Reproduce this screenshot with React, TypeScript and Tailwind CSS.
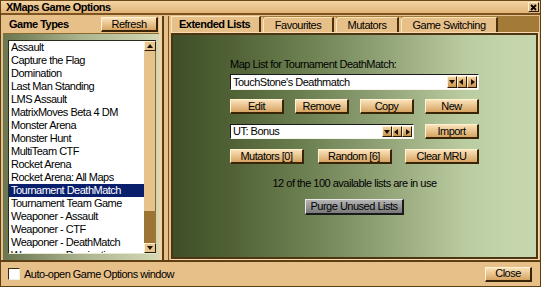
import React from "react";

const items = [
  "Assault",
  "Capture the Flag",
  "Domination",
  "Last Man Standing",
  "LMS Assault",
  "MatrixMoves Beta 4 DM",
  "Monster Arena",
  "Monster Hunt",
  "MultiTeam CTF",
  "Rocket Arena",
  "Rocket Arena: All Maps",
  "Tournament DeathMatch",
  "Tournament Team Game",
  "Weaponer - Assault",
  "Weaponer - CTF",
  "Weaponer - DeathMatch",
  "Weaponer - Domination",
];

function Btn({ w, children, className = "" }: { w: string; children: React.ReactNode; className?: string }) {
  return (
    <div
      className={`${w} ${className} h-[15px] flex items-center justify-center border-t border-l border-[#fff3d6] border-r-2 border-b-2 border-r-[#3a2408] border-b-[#3a2408] bg-gradient-to-b from-[#fae2b8] to-[#d6a462] text-[11px] leading-none text-black`}
    >
      {children}
    </div>
  );
}

function Tri({ dir }: { dir: "down" | "left" | "right" | "up" }) {
  const pts =
    dir === "down"
      ? "1,2 7,2 4,6"
      : dir === "up"
      ? "1,6 7,6 4,2"
      : dir === "left"
      ? "5,1 5,7 1,4"
      : "3,1 3,7 7,4";
  return (
    <svg width="8" height="8" viewBox="0 0 8 8">
      <polygon points={pts} fill="#1a1208" />
    </svg>
  );
}

function ArrowBox({ dir }: { dir: "down" | "left" | "right" | "up" }) {
  return (
    <div className="w-[10px] h-full flex items-center justify-center bg-gradient-to-b from-[#f2d29e] to-[#c8944e] border-t border-l border-[#fff0d0] border-r border-b border-r-[#2a1a06] border-b-[#2a1a06]">
      <Tri dir={dir} />
    </div>
  );
}

function Combo({ w, text, h }: { w: string; text: string; h: string }) {
  return (
    <div className={`${w} ${h} flex items-stretch bg-white border-t border-l border-[#1a1a1a] border-r border-b border-r-[#f4f4e8] border-b-[#f4f4e8]`}>
      <div className="flex-1 pl-[2px] text-[11px] leading-none flex items-center text-black">{text}</div>
      <div className="flex items-stretch py-[1px] pr-[1px] gap-0">
        <ArrowBox dir="down" />
        <ArrowBox dir="left" />
        <ArrowBox dir="right" />
      </div>
    </div>
  );
}

export default function App() {
  return (
    <div
      className="w-[541px] h-[287px] bg-[#e7bf88] flex flex-col overflow-hidden border-l border-r border-b border-[#5e3f14] text-black tracking-[-0.5px]"
      style={{ fontFamily: '"Liberation Sans", Arial, sans-serif' }}
    >
      {/* Title bar */}
      <div className="h-[15px] flex items-center justify-between pl-[5px] pr-[1px] bg-gradient-to-b from-[#f3d4a2] to-[#e2b57a] border-t border-[#6a4818] border-b-2 border-b-[#7a5320] shrink-0">
        <span className="text-[11px] font-bold leading-none">XMaps Game Options</span>
        <div className="w-[11px] h-[10px] flex items-center justify-center bg-[#e6c08a] border-t border-l border-[#fff0d0] border-r border-b border-r-[#2a1a06] border-b-[#2a1a06]">
          <svg width="7" height="7" viewBox="0 0 7 7">
            <path d="M1 1 L6 6 M6 1 L1 6" stroke="#000" strokeWidth="1.8" />
          </svg>
        </div>
      </div>

      {/* Main */}
      <div className="flex flex-1 min-h-0 pt-[1px]">
        {/* Left panel */}
        <div className="w-[158px] pl-[2px] flex flex-col shrink-0 min-h-0">
          <div className="h-[17px] shrink-0 flex items-center justify-between pl-[6px] pr-[1px]">
            <span className="text-[11px] font-bold leading-none">Game Types</span>
            <Btn w="w-[57px]">Refresh</Btn>
          </div>
          <div className="flex-1 min-h-0 overflow-hidden bg-gradient-to-r from-[#6a7650] via-[#aab48e] to-[#d4d8b4] pt-[6px] pl-[5px] pr-[3px] pb-[6px] flex border-t border-[#8a6a30]">
            <div className="flex flex-1 min-h-0 border-t border-l border-[#2a2a1a] border-b border-b-[#e8e8d0]">
              <div className="flex-1 min-h-0 bg-white overflow-hidden">
                {items.map((it) => (
                  <div
                    key={it}
                    className={`h-[13px] pl-[2px] text-[11px] leading-[13px] whitespace-nowrap ${
                      it === "Tournament DeathMatch" ? "bg-[#0a1f6b] text-white" : "text-black"
                    }`}
                  >
                    {it}
                  </div>
                ))}
              </div>
              <div className="w-[12px] flex flex-col bg-[#9c7434]">
                <div className="h-[10px] flex items-center justify-center bg-[#e8c690] border-t border-l border-[#fff0d0] border-r border-b border-r-[#2a1a06] border-b-[#2a1a06]">
                  <Tri dir="up" />
                </div>
                <div className="h-[160px] bg-[#e6c28c] border-r border-[#8a6428]" />
                <div className="flex-1" />
                <div className="h-[10px] flex items-center justify-center bg-[#e8c690] border-t border-l border-[#fff0d0] border-r border-b border-r-[#2a1a06] border-b-[#2a1a06]">
                  <Tri dir="down" />
                </div>
              </div>
            </div>
          </div>
        </div>

        {/* Splitter */}
        <div className="w-[12px] flex shrink-0">
          <div className="w-[3px] bg-[#f0d4a4]" />
          <div className="w-[2px] bg-[#5a3c12]" />
          <div className="w-[4px] bg-[#e7bf88]" />
          <div className="w-[1px] bg-[#7a5422]" />
        </div>

        {/* Right panel */}
        <div className="flex-1 flex flex-col pr-[1px]">
          <div className="h-[16px] flex items-end bg-[#a47a38] shrink-0">
            <div className="w-[90px] h-[16px] bg-[#e7bf88] border-l border-t border-[#fbe4b8] border-r-2 border-r-[#4a300c] flex items-center pl-[7px] text-[11px] font-bold leading-none">
              Extended Lists
            </div>
            <div className="w-[2px] h-[15px] bg-[#e7bf88]" />
            <div className="w-[71px] h-[15px] bg-[#e7bf88] rounded-tl-[3px] border-l border-t border-[#fbe4b8] border-r-2 border-r-[#4a300c] flex items-center justify-center text-[11px] leading-none">
              Favourites
            </div>
            <div className="w-[2px] h-[15px] bg-[#e7bf88]" />
            <div className="w-[63px] h-[15px] bg-[#e7bf88] rounded-tl-[3px] border-l border-t border-[#fbe4b8] border-r-2 border-r-[#4a300c] flex items-center justify-center text-[11px] leading-none">
              Mutators
            </div>
            <div className="w-[2px] h-[15px] bg-[#e7bf88]" />
            <div className="w-[97px] h-[15px] bg-[#e7bf88] rounded-tl-[3px] border-l border-t border-[#fbe4b8] border-r-2 border-r-[#4a300c] flex items-center justify-center text-[11px] leading-none">
              Game Switching
            </div>
          </div>
          <div className="flex-1 border-t border-[#f6dcb0] border-r border-r-[#f6dcb0] border-b border-b-[#f6dcb0] p-0 flex">
            <div className="flex-1 border-2 border-[#4e3410] bg-[linear-gradient(to_right,#3e4e29_0%,#4f6134_15%,#6f8254_38%,#98aa7e_62%,#b9cb9f_80%,#c4d5ac_92%,#c6d6ae_100%)] flex flex-col items-center pt-[23px]">
              <div className="w-[249px] flex flex-col">
                <div className="h-[13px] text-[11px] leading-[13px]">Map List for Tournament DeathMatch:</div>
                <div className="mt-[3px]">
                  <Combo w="w-[249px]" h="h-[16px]" text="TouchStone's Deathmatch" />
                </div>
                <div className="mt-[9px] flex justify-between">
                  <Btn w="w-[54px]">Edit</Btn>
                  <Btn w="w-[54px]">Remove</Btn>
                  <Btn w="w-[54px]">Copy</Btn>
                  <Btn w="w-[54px]">New</Btn>
                </div>
                <div className="mt-[10px] flex justify-between items-center">
                  <Combo w="w-[184px]" h="h-[15px]" text="UT: Bonus" />
                  <Btn w="w-[54px]">Import</Btn>
                </div>
                <div className="mt-[10px] flex justify-between">
                  <Btn w="w-[74px]">Mutators [0]</Btn>
                  <Btn w="w-[74px]">Random [6]</Btn>
                  <Btn w="w-[74px]">Clear MRU</Btn>
                </div>
                <div className="mt-[13px] h-[13px] text-[11px] leading-[13px] text-center">
                  12 of the 100 available lists are in use
                </div>
                <div className="mt-[9px] flex justify-center">
                  <div className="w-[99px] h-[16px] flex items-center justify-center border-t border-l border-[#e8e8e8] border-r-2 border-b-2 border-r-[#1a1a1a] border-b-[#1a1a1a] bg-gradient-to-b from-[#b4b4b4] to-[#7a7a7a] text-[11px] leading-none">
                    Purge Unused Lists
                  </div>
                </div>
              </div>
            </div>
          </div>
        </div>
      </div>

      {/* Bottom bar */}
      <div className="h-[26px] shrink-0 flex items-center justify-between pl-[7px] pr-[8px] border-t-2 border-[#5e3f14]">
        <div className="flex items-center gap-[4px]">
          <div className="w-[12px] h-[12px] bg-white border-t border-l border-[#3a2a10] border-r border-b border-r-[#f0f0e0] border-b-[#f0f0e0]" />
          <span className="text-[11px] leading-none">Auto-open Game Options window</span>
        </div>
        <Btn w="w-[47px]">Close</Btn>
      </div>
    </div>
  );
}
